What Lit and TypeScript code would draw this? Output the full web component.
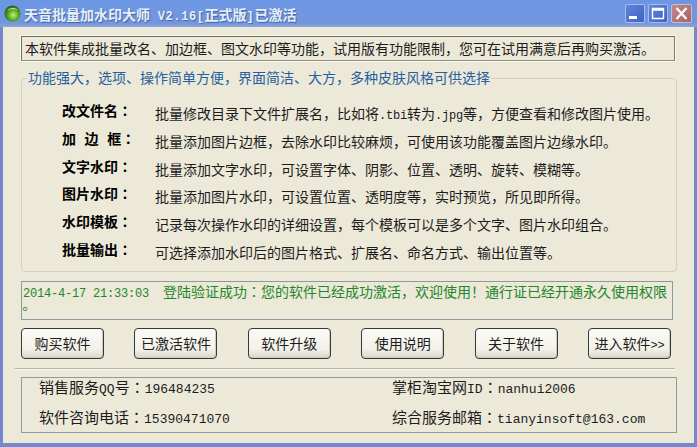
import { css, html, LitElement } from "lit";
import { customElement } from "lit/decorators.js";

const colon = html`<span class="colon">：</span>`;
const en = (s: string) => html`<span class="en">${s}</span>`;

const features = [
  { label: "改文件名", text: html`批量修改目录下文件扩展名，比如将${en(".tbi")}转为${en(".jpg")}等，方便查看和修改图片使用。` },
  { label: "加 边 框", text: html`批量添加图片边框，去除水印比较麻烦，可使用该功能覆盖图片边缘水印。` },
  { label: "文字水印", text: html`批量添加文字水印，可设置字体、阴影、位置、透明、旋转、模糊等。` },
  { label: "图片水印", text: html`批量添加图片水印，可设置位置、透明度等，实时预览，所见即所得。` },
  { label: "水印模板", text: html`记录每次操作水印的详细设置，每个模板可以是多个文字、图片水印组合。` },
  { label: "批量输出", text: html`可选择添加水印后的图片格式、扩展名、命名方式、输出位置等。` },
];

const buttons = [
  html`购买软件`,
  html`已激活软件`,
  html`软件升级`,
  html`使用说明`,
  html`关于软件`,
  html`进入软件${en(">>")}`,
];

@customElement("app-root")
export class AppRoot extends LitElement {
  static styles = css`
    :host {
      display: block;
      width: 697px;
      height: 447px;
      overflow: hidden;
      font-family: "Noto Sans CJK SC", "Liberation Sans", sans-serif;
      font-size: 14px;
      line-height: 22px;
      color: #1c1c1c;
    }
    .window {
      display: flex;
      flex-direction: column;
      height: 100%;
      background: #7488d2;
    }
    .titlebar {
      flex: none;
      display: flex;
      align-items: center;
      height: 27px;
      padding: 0 5px 0 4px;
      background: linear-gradient(#6c96e4, #6f97e2 40%, #7396dc 85%, #8aa5dc);
      color: #e6eefb;
      font-weight: 700;
      text-shadow: 1px 1px 1px #44649f;
    }
    .logo {
      flex: none;
      width: 17px;
      height: 17px;
      margin-right: 3px;
    }
    .title {
      flex: 1;
      white-space: pre;
    }
    .en {
      font-family: "Liberation Mono", monospace;
      font-size: 12px;
      line-height: 1;
      letter-spacing: -0.2px;
    }
    .title .en {
      letter-spacing: 0.6px;
    }
    .colon {
      font-family: "Noto Sans CJK TC", sans-serif;
    }
    .stop {
      font-family: "Noto Sans CJK TC", sans-serif;
      margin-left: -5px;
    }
    .winbtns {
      display: flex;
      gap: 3px;
      margin-top: -1px;
    }
    .winbtn {
      display: flex;
      align-items: center;
      justify-content: center;
      width: 20px;
      height: 19px;
      box-sizing: border-box;
      border: 1px solid #a9bbe8;
      border-radius: 2px;
      background: linear-gradient(135deg, #5f86dc, #3f62c6);
    }
    .winbtn.close {
      width: 21px;
      background: linear-gradient(135deg, #c08a8e, #aa6168);
      border-color: #d3b9c2;
    }
    .client {
      flex: 1;
      display: flex;
      flex-direction: column;
      margin: 0 3px 4px 3px;
      padding: 9px 17px 0 18px;
      background: #ece9d9;
    }
    .notice {
      height: 25px;
      box-sizing: border-box;
      padding-left: 3px;
      margin-right: 2px;
      border: 1px solid;
      border-color: #6f6c60 #7f7c70 #8f8c80 #6f6c60;
      outline: 1px solid #f8f7f0;
      line-height: 22px;
      white-space: nowrap;
    }
    fieldset {
      margin: 9px 0 0;
      padding: 0;
      height: 202px;
      box-sizing: border-box;
      border: 1px solid #d3d1be;
      border-radius: 4px;
      min-width: 0;
    }
    legend {
      margin-left: 5px;
      padding: 0 1px;
      height: 16px;
      line-height: 15px;
      color: #265f9e;
    }
    .features {
      display: grid;
      grid-template-columns: 93px 1fr;
      grid-auto-rows: 27.8px;
      margin-top: 13px;
      padding-left: 40px;
      white-space: nowrap;
    }
    .label {
      font-weight: 700;
      color: #000;
      white-space: pre;
      word-spacing: 5.4px;
    }
    .desc {
      padding-top: 3px;
    }
    .log {
      height: 39px;
      box-sizing: border-box;
      margin: 9px 4px 0 0;
      padding: 1px 1px 0;
      border: 1px solid #8b9a9a;
      color: #23862a;
      line-height: 16px;
      white-space: pre;
    }
    .buttons {
      display: flex;
      align-items: flex-start;
      justify-content: space-between;
      margin: 8px 6px 0 0;
    }
    button {
      display: block;
      width: 83px;
      height: 31px;
      padding: 0 0 2px;
      border: 1px solid #2e3b42;
      border-radius: 4px;
      background: linear-gradient(#fbfaf6, #f3f1e8 70%, #d9d6c6);
      box-shadow: inset -1px -1px 0 #cfccbb;
      font: inherit;
      color: #1c1c1c;
    }
    .separator {
      height: 1px;
      margin: 9px 2px 0 -6px;
      background: #b6b4a4;
      border-bottom: 1px solid #fbfaf4;
    }
    .info {
      display: grid;
      grid-template-columns: 353px 1fr;
      grid-auto-rows: 30px;
      height: 56px;
      box-sizing: border-box;
      margin-top: 7px;
      padding-left: 17px;
      border: 1px solid #8f9a9a;
      font-size: 15px;
      line-height: 18px;
      white-space: pre;
    }
    .info .en {
      font-size: 13px;
      letter-spacing: 0;
    }
  `;

  render() {
    return html`
      <div class="window">
        <div class="titlebar">
          <svg class="logo" viewBox="0 0 17 17">
            <defs>
              <radialGradient id="orb" cx="0.55" cy="0.6" r="0.6">
                <stop offset="0" stop-color="#c8f078" />
                <stop offset="0.5" stop-color="#5fae2a" />
                <stop offset="1" stop-color="#1c5a1a" />
              </radialGradient>
            </defs>
            <circle cx="8.5" cy="8.5" r="8" fill="url(#orb)" />
            <path d="M3 5.5C5 2.5 11 2 14 5C11 4 6 4 3 5.5Z" fill="#dff0e4" opacity="0.75" />
          </svg>
          <span class="title">天音批量加水印大师${en(" V2.16[")}正式版${en("]")}已激活</span>
          <div class="winbtns">
            <div class="winbtn">
              <svg width="18" height="17" viewBox="0 0 18 17"><rect x="3" y="11" width="8" height="3" fill="#fff" /></svg>
            </div>
            <div class="winbtn">
              <svg width="18" height="17" viewBox="0 0 18 17">
                <path d="M3.5 3.5H14.5V13.5H3.5ZM3.5 5H14.5" fill="none" stroke="#fff" stroke-width="1.4" />
              </svg>
            </div>
            <div class="winbtn close">
              <svg width="19" height="17" viewBox="0 0 19 17">
                <path d="M4.5 3L14.5 14M14.5 3L4.5 14" fill="none" stroke="#fff" stroke-width="2.2" />
              </svg>
            </div>
          </div>
        </div>
        <div class="client">
          <div class="notice">本软件集成批量改名、加边框、图文水印等功能，试用版有功能限制，您可在试用满意后再购买激活。</div>
          <fieldset>
            <legend>功能强大，选项、操作简单方便，界面简洁、大方，多种皮肤风格可供选择</legend>
            <div class="features">
              ${features.map(
                (f) => html`
                  <div class="label">${f.label}${colon}</div>
                  <div class="desc">${f.text}</div>
                `,
              )}
            </div>
          </fieldset>
          <div class="log">${en("2014-4-17 21:33:03  ")}登陆验证成功${colon}您的软件已经成功激活，欢迎使用！通行证已经开通永久使用权限<br /><span class="stop">。</span></div>
          <div class="buttons">
            ${buttons.map((b) => html`<button>${b}</button>`)}
          </div>
          <div class="separator"></div>
          <div class="info">
            <div>销售服务${en("QQ")}号${colon}${en("196484235")}</div>
            <div>掌柜淘宝网${en("ID")}${colon}${en("nanhui2006")}</div>
            <div>软件咨询电话${colon}${en("15390471070")}</div>
            <div>综合服务邮箱${colon}${en("tianyinsoft@163.com")}</div>
          </div>
        </div>
      </div>
    `;
  }
}
